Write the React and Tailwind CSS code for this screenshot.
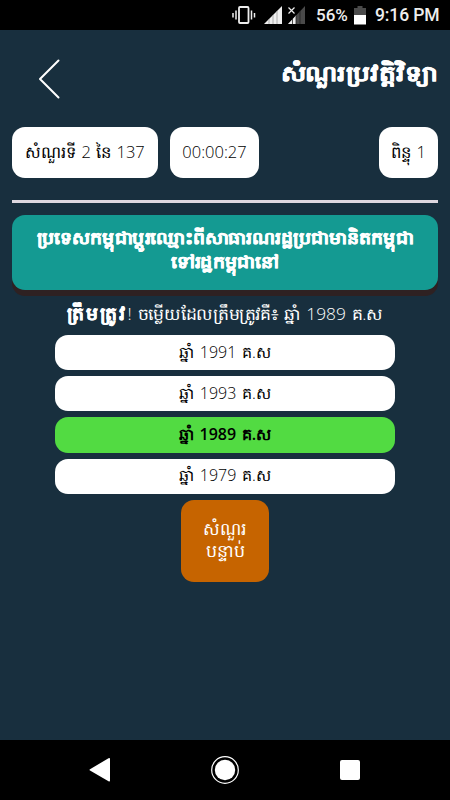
const answers = [
  { label: 'ឆ្នាំ 1991 គ.ស', correct: false },
  { label: 'ឆ្នាំ 1993 គ.ស', correct: false },
  { label: 'ឆ្នាំ 1989 គ.ស', correct: true },
  { label: 'ឆ្នាំ 1979 គ.ស', correct: false },
];

export default function App() {
  return (
    <div className="w-[450px] h-[800px] flex flex-col overflow-hidden bg-[#182f3e] font-['Open_Sans',sans-serif] font-light">
      <StatusBar />

      <main className="flex-1 flex flex-col px-3">
        {/* Header */}
        <header className="h-[97px] flex items-center justify-between">
          <button aria-label="Back" className="ml-[26px]">
            <svg width="22" height="40" viewBox="0 0 22 40" fill="none" stroke="#fff" strokeWidth="2" strokeLinecap="round" strokeLinejoin="round">
              <path d="M20.500 1.500 2 20l18.500 18.500" />
            </svg>
          </button>
          <h1 className="mb-3 text-[21.5px] leading-8 font-black text-white whitespace-nowrap origin-right scale-x-[1.23] [-webkit-text-stroke:0.4px_white]">
            សំណួរប្រវត្តិវិទ្យា
          </h1>
        </header>

        {/* Progress, timer and score */}
        <div className="flex gap-3 h-[51px]">
          <Chip className="w-[146px] text-[16.5px] [word-spacing:1px]">សំណួរទី 2 នៃ 137</Chip>
          <Chip className="w-[89px] text-[16.5px]">00:00:27</Chip>
          <Chip className="w-[59px] ml-auto text-[16.5px] [word-spacing:1px]">ពិន្ទុ 1</Chip>
        </div>

        <hr className="mt-[22px] h-[3px] shrink-0 border-0 bg-[#ded8e0]" />

        <section className="mt-3 h-[75px] shrink-0 rounded-[13px] bg-[#149a92] shadow-[0_6px_0_#2e2122] pt-[11px] text-center text-[17px] leading-6 font-black text-white whitespace-nowrap [-webkit-text-stroke:0.4px_white]">
          <p className="scale-x-[1.115]">ប្រទេសកម្ពុជាប្តូរឈ្មោះពីសាធារណរដ្ឋប្រជាមានិតកម្ពុជា</p>
          <p className="scale-x-[1.115]">ទៅរដ្ឋកម្ពុជានៅ</p>
        </section>

        <p className="mt-[8px] h-[30px] text-center text-[16.5px] leading-[30px] text-white whitespace-nowrap [word-spacing:1.5px] scale-x-[1.05]">
          <b className="text-[18px] tracking-[2.2px] font-black [-webkit-text-stroke:0.3px_white]">ត្រឹមត្រូវ</b>! ចម្លើយដែលត្រឹមត្រូវគឺ៖ ឆ្នាំ 1989 គ.ស
        </p>

        <ul className="mt-[7px] flex flex-col gap-1.5 items-center">
          {answers.map((a) => (
            <li
              key={a.label}
              className={`w-[340px] h-[35.2px] pb-0.5 flex items-center justify-center rounded-[13px] text-[16px] leading-6 text-black [word-spacing:1.5px] ${
                a.correct ? 'bg-[#52db42] font-semibold' : 'bg-white'
              }`}
            >
              {a.label}
            </li>
          ))}
        </ul>

        <button className="self-center mt-[6px] pb-1 w-[88px] h-[82px] rounded-[13px] bg-[#c66400] text-[17.5px] leading-[22px] text-white">
          សំណួរ
          <br />
          បន្ទាប់
        </button>
      </main>

      <NavBar />
    </div>
  );
}

function Chip({ className, children }) {
  return (
    <div className={`flex items-center justify-center rounded-[13px] bg-white text-black whitespace-nowrap ${className}`}>
      {children}
    </div>
  );
}

function StatusBar() {
  return (
    <div className="h-[30px] shrink-0 flex items-center bg-black pl-[232px] font-[Roboto,sans-serif] text-[17.5px] font-medium text-[#eee]">
      {/* Vibrate */}
      <svg width="24" height="20" viewBox="0 0 24 20" fill="none" stroke="#eee">
        <rect x="7" y="2" width="9.500" height="16" rx="1" strokeWidth="1.800" />
        <path d="M4 5.500v9M19.500 5.500v9" strokeWidth="1.500" />
        <path d="M1 8v4.500M22.500 8v4.500" strokeWidth="1.500" />
      </svg>
      {/* Signal */}
      <svg className="ml-2" width="18" height="18" viewBox="0 0 18 18">
        <path d="M0 18 18 0v18z" fill="#eee" />
        <path d="M5 13v5M9 9v9M13 5v13" stroke="#999" strokeWidth=".8" />
      </svg>
      <svg className="ml-[5px]" width="19" height="18" viewBox="0 0 19 18">
        <path d="M1 18 18 0v18z" fill="#4a4a4a" />
        <path d="M1 18 9 9.500V18z" fill="#eee" />
        <path d="M5.500 13v5M9 10v8M13 5v13" stroke="#222" strokeWidth=".8" />
        <path d="m1.500 1.500 6 6m0-6-6 6" stroke="#eee" strokeWidth="1.200" />
      </svg>
      <span className="ml-2.5 w-[33px] pt-px text-[17px]">56%</span>
      {/* Battery */}
      <svg className="ml-[5px]" width="12" height="19" viewBox="0 0 12 19">
        <path d="M3.500 0h5v2H12v7H0V2h3.500z" fill="#4a4a4a" />
        <path d="M0 9h12v9.500H0z" fill="#fff" />
      </svg>
      <span className="ml-[9px] pt-px tracking-[-0.1px] whitespace-nowrap">9:16 PM</span>
    </div>
  );
}

function NavBar() {
  return (
    <nav className="h-[60px] shrink-0 flex items-center justify-between bg-black pl-[89px] pr-[90px]">
      <svg width="22" height="26" viewBox="0 0 22 26" fill="#fff">
        <path d="M1 12.300 19.500 1.200q1.500-.7 1.500.8v21.500q0 1.500-1.500.7L1 13.500q-1-.6 0-1.200z" />
      </svg>
      <svg className="mr-0.5" width="28" height="28" viewBox="0 0 28 28">
        <circle cx="14" cy="14" r="13.300" fill="none" stroke="#fff" strokeWidth="1.200" />
        <circle cx="14" cy="14" r="10.200" fill="#fff" />
      </svg>
      <span className="w-5 h-5 rounded-[2px] bg-white" />
    </nav>
  );
}
